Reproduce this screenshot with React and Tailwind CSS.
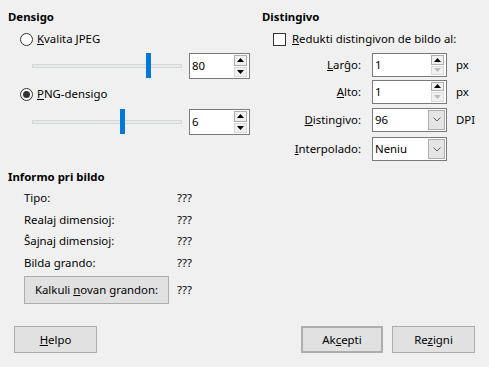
import React from 'react'

const FONT = { fontFamily: '"Segoe UI", "Noto Sans", "Open Sans", sans-serif' }

function Radio({ checked }) {
  return (
    <span className="w-[13px] h-[13px] rounded-full border border-[#333] bg-white flex items-center justify-center shrink-0">
      {checked && <span className="w-[7px] h-[7px] rounded-full bg-[#333]" />}
    </span>
  )
}

function Arrow({ up, disabled }) {
  return (
    <svg width="7" height="4" viewBox="0 0 7 4">
      <path d={up ? 'M0 4 L3.5 0 L7 4 Z' : 'M0 0 L3.5 4 L7 0 Z'} fill={disabled ? '#bcbcbc' : '#000'} />
    </svg>
  )
}

function SpinBox({ value, width, height, downDisabled }) {
  return (
    <div
      className="flex items-stretch border border-[#7a7a7a] bg-white"
      style={{ width, height }}
    >
      <span className="flex-1 flex items-center pl-[2px]">{value}</span>
      <div className="flex flex-col gap-[1px] py-[1px] pr-[2px]">
        <span className="flex-1 w-[13px] border border-[#adadad] bg-[#f0f0f0] flex items-center justify-center">
          <Arrow up />
        </span>
        <span className="flex-1 w-[13px] border border-[#d9d9d9] bg-[#f0f0f0] flex items-center justify-center">
          <Arrow disabled={downDisabled} />
        </span>
      </div>
    </div>
  )
}

function Combo({ value }) {
  return (
    <div className="flex items-stretch w-[75px] h-[24px] border border-[#7a7a7a] bg-white">
      <span className="flex-1 flex items-center pl-[2px]">{value}</span>
      <span className="w-[17px] my-[1px] mr-[1px] border border-[#adadad] bg-[#e5e5e5] flex items-center justify-center">
        <svg width="8" height="5" viewBox="0 0 8 5">
          <path d="M0.5 0.5 L4 4 L7.5 0.5" fill="none" stroke="#606060" strokeWidth="1" />
        </svg>
      </span>
    </div>
  )
}

function Slider({ pos }) {
  return (
    <div className="relative w-[150px] h-[26px] flex items-center">
      <div className="w-full h-[4px] bg-[#e7eaea] border border-[#d6d6d6]" />
      <div className="absolute top-0 w-[5px] h-[25px] bg-[#0078d7]" style={{ left: pos }} />
    </div>
  )
}

function FieldRow({ u, rest, children, unit, h }) {
  return (
    <div className="flex items-center" style={{ height: h }}>
      <span className="w-[110px] text-right pr-[11px]">
        <u>{u}</u>{rest}
      </span>
      {children}
      <span className="pl-[9px]">{unit}</span>
    </div>
  )
}

function Btn({ children, className = '' }) {
  return (
    <div className={`h-[27px] flex items-center justify-center bg-[#e1e1e1] border border-[#adadad] ${className}`}>
      {children}
    </div>
  )
}

export default function App() {
  const info = [
    ['Tipo:', '???'],
    ['Realaj dimensioj:', '???'],
    ['Ŝajnaj dimensioj:', '???'],
    ['Bilda grando:', '???'],
  ]
  return (
    <div className="w-[489px] h-[367px] bg-[#f0f0f0] text-black text-[11.4px] leading-none overflow-hidden" style={FONT}>
      <div className="flex pt-[8px]">
        {/* Densigo */}
        <div className="w-[254px] pl-[8px]">
          <div className="h-[18px] flex items-center font-bold">Densigo</div>
          <div className="h-[24px] mt-[1px] flex items-center gap-[4px] pl-[12px]">
            <Radio />
            <span><u>K</u>valita JPEG</span>
          </div>
          <div className="flex items-center mt-[2px] pl-[24px] gap-[7px]">
            <Slider pos={114} />
            <SpinBox value="80" width={61} height={26} />
          </div>
          <div className="h-[24px] mt-[3px] flex items-center gap-[4px] pl-[12px]">
            <Radio checked />
            <span><u>P</u>NG-densigo</span>
          </div>
          <div className="flex items-center mt-[3px] pl-[24px] gap-[7px]">
            <Slider pos={88} />
            <SpinBox value="6" width={61} height={26} />
          </div>
        </div>

        {/* Distingivo */}
        <div className="flex-1 pl-[8px]">
          <div className="h-[18px] flex items-center font-bold">Distingivo</div>
          <div className="h-[26px] flex items-center gap-[6px] pl-[11px]">
            <span className="w-[13px] h-[13px] border border-[#333] bg-white shrink-0" />
            <span><u>R</u>edukti distingivon de bildo al:</span>
          </div>
          <FieldRow u="L" rest="arĝo:" unit="px" h={26}>
            <SpinBox value="1" width={75} height={24} downDisabled />
          </FieldRow>
          <FieldRow u="A" rest="lto:" unit="px" h={27}>
            <SpinBox value="1" width={75} height={24} downDisabled />
          </FieldRow>
          <FieldRow u="D" rest="istingivo:" unit="DPI" h={29}>
            <Combo value="96" />
          </FieldRow>
          <FieldRow u="I" rest="nterpolado:" h={30}>
            <Combo value="Neniu" />
          </FieldRow>
        </div>
      </div>

      {/* Informo pri bildo */}
      <div className="pl-[8px] mt-[4px]">
        <div className="h-[18px] flex items-center font-bold">Informo pri bildo</div>
        <div className="pl-[16px] pt-[1px]">
          {info.map(([k, v]) => (
            <div key={k} className="h-[21.5px] flex items-center">
              <span className="w-[153px]">{k}</span>
              <span>{v}</span>
            </div>
          ))}
          <div className="flex items-center mt-[3px]">
            <Btn className="w-[145px] h-[28px]">
              <span>Kalkuli <u>n</u>ovan grandon:</span>
            </Btn>
            <span className="pl-[8px]">???</span>
          </div>
        </div>
      </div>

      {/* Buttons */}
      <div className="flex items-center px-[14px] mt-[22px]">
        <Btn className="w-[83px]"><span><u>H</u>elpo</span></Btn>
        <div className="flex-1" />
        <Btn className="w-[82px] border-2 border-[#0078d7]"><span>Ak<u>c</u>epti</span></Btn>
        <Btn className="w-[83px] ml-[9px]"><span>Re<u>z</u>igni</span></Btn>
      </div>
    </div>
  )
}
